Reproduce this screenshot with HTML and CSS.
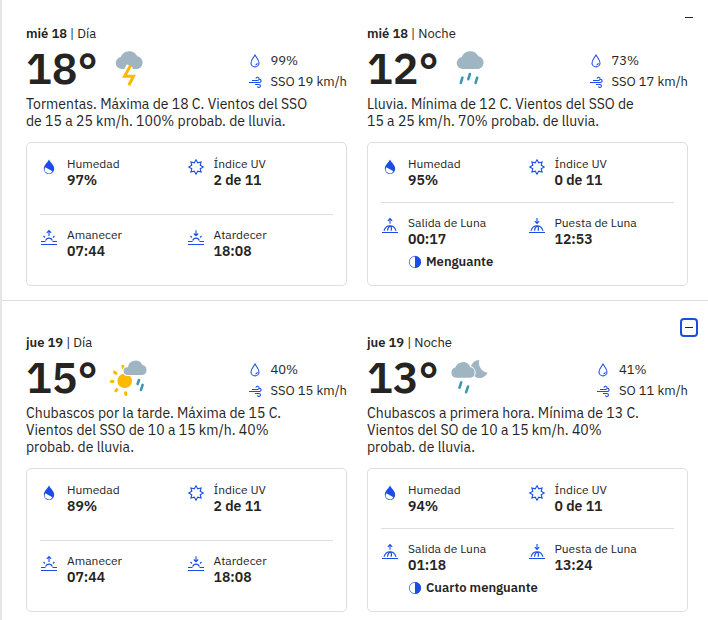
FILE: index.html
```html
<!DOCTYPE html>
<html lang="es">
<head>
<meta charset="utf-8">
<meta name="viewport" content="width=device-width, initial-scale=1">
<title>Pronóstico diario</title>
<link rel="stylesheet" href="styles.css">
</head>
<body>
<svg class="sprite" aria-hidden="true">
  <symbol id="storm" viewBox="0 0 40 40">
    <path class="cloud" d="M13 21a6 6 0 0 1-1.300-11.900A9 9 0 0 1 28.300 8.300 6.400 6.400 0 0 1 27 21z"/>
    <path class="halo" d="M21 18l-6 11h9.500l-4.500 9"/>
    <path class="bolt" d="M21.500 17.500L15.600 28.300H24.500L19.800 37.300"/>
  </symbol>
  <symbol id="rain" viewBox="0 0 40 40">
    <path class="cloud" d="M13 21a6 6 0 0 1-1.300-11.900A9 9 0 0 1 28.300 8.300 6.400 6.400 0 0 1 27 21z"/>
    <path class="drops" d="M12.400 29.700l-1.600 5.200M19.900 26l-1.600 5.200M27.200 29.700l-1.600 5.200"/>
  </symbol>
  <symbol id="sun-shower" viewBox="0 0 40 40">
    <circle class="sun" cx="15.700" cy="23.800" r="7.300"/>
    <path class="rays" d="M13.800 9.200l.4 1.600M5.500 15.200l1.500 1.100M2.300 24.600l1.700-.2M6.800 33.900l1.100-1.300M16.600 35.800l.2 1.600"/>
    <path class="cloud cloud-front" d="M18.500 18a4 4 0 0 1-1.200-7.800H19A7.500 7.500 0 0 1 33.300 8 5.100 5.100 0 0 1 33.500 18z"/>
    <path class="drops" d="M30 23l-1.400 4M33.600 27.900l-1.600 5"/>
  </symbol>
  <symbol id="moon-rain" viewBox="0 0 40 40">
    <path class="cloud" d="M29.300 3A10 10 0 0 0 37.700 15.700 9 9 0 1 1 29.300 3z"/>
    <path class="cloud cloud-front" d="M6.500 20.800a5.200 5.200 0 0 1-1.300-10.200A8 8 0 0 1 20.200 10.100 5.400 5.400 0 0 1 19.800 20.800z"/>
    <path class="drops" d="M11.200 25.400l-1.700 5.300M18 29.600l-1.900 5.600"/>
  </symbol>
  <symbol id="drop" viewBox="0 0 16 16">
    <path class="line" d="M8 2C6.500 4.600 4 6.900 4 9.900a4 4 0 0 0 8 0C12 6.900 9.500 4.600 8 2zM8.500 12c1.100-.2 1.700-.9 1.800-1.900"/>
  </symbol>
  <symbol id="wind" viewBox="0 0 16 16">
    <path class="line" d="M5 6.500h5.500a1.600 1.600 0 1 0-1.600-1.900M2 8.500h10.500a1.600 1.600 0 1 0-.6-3.100M8 10.500h4a1.500 1.500 0 1 1-1.500 1.900"/>
  </symbol>
  <symbol id="humidity" viewBox="0 0 18 18">
    <path class="fill" fill-rule="evenodd" d="M9 1.500C7.200 4.900 3.800 7.200 3.800 10.700a5.200 5.200 0 0 0 10.400 0C14.200 7.200 10.800 4.900 9 1.500zM5.300 9.200l7.100 4a3.900 3.900 0 0 1-7.100-4z"/>
  </symbol>
  <symbol id="uv" viewBox="0 0 18 18">
    <path class="line" d="M9 1.800l1.700 3 3.400-.9-.9 3.400 3 1.700-3 1.700.9 3.400-3.400-.9-1.700 3-1.700-3-3.400.9.9-3.400-3-1.700 3-1.700-.9-3.400 3.400.9z"/>
  </symbol>
  <symbol id="sunrise" viewBox="0 0 18 18">
    <path class="line" d="M1 12.500h4.500M12.500 12.500H17M1 15.500h16M5.700 11.700a3.400 3.400 0 0 1 6.600 0M9 7V2M6.800 3.800L9 1.600l2.200 2.200M5 8.500L3.500 7M13 8.500L14.500 7"/>
  </symbol>
  <symbol id="sunset" viewBox="0 0 18 18">
    <path class="line" d="M1 12.500h4.500M12.500 12.500H17M1 15.500h16M5.700 11.700a3.400 3.400 0 0 1 6.600 0M9 1.300v5.300M6.800 4.500L9 6.700l2.200-2.200M5 8.500L3.500 7M13 8.500L14.500 7"/>
  </symbol>
  <symbol id="moonrise" viewBox="0 0 18 18">
    <path class="line" d="M1 15.500h16M3 13.800C4 10.500 6.200 8.700 9 8.700s5 1.800 6 5.100M9.500 8.800C7.500 9.800 6.700 11.500 6.500 13.800M9.500 8.800c1.200 1.200 1.300 2.900.5 5M9 6.800V1.600M6.800 3.800L9 1.600l2.200 2.200"/>
  </symbol>
  <symbol id="moonset" viewBox="0 0 18 18">
    <path class="line" d="M1 15.500h16M3 13.800C4 10.500 6.200 8.700 9 8.700s5 1.800 6 5.100M9.500 8.800C7.500 9.800 6.700 11.500 6.500 13.800M9.500 8.800c1.200 1.200 1.300 2.900.5 5M9 1v5.300M6.800 4.200L9 6.400l2.200-2.200"/>
  </symbol>
  <symbol id="waning" viewBox="0 0 14 14">
    <circle class="ring" cx="7" cy="7" r="5.700"/>
    <path class="fill" d="M7 1a6 6 0 0 1 0 12z"/>
  </symbol>
</svg>

<main class="forecast">
  <section class="day">
    <button class="toggle" type="button" aria-label="Contraer mié 18"></button>
    <article class="part">
      <h2 class="title"><strong>mié 18</strong> | Día</h2>
      <div class="summary">
        <span class="temp">18°</span>
        <svg class="weather"><use href="#storm"/></svg>
        <ul class="stats">
          <li><svg><use href="#drop"/></svg>99%</li>
          <li><svg><use href="#wind"/></svg>SSO 19 km/h</li>
        </ul>
      </div>
      <p class="text">Tormentas. Máxima de 18 C. Vientos del SSO de 15 a 25 km/h. 100% probab. de lluvia.</p>
      <div class="card">
        <div class="pair">
          <div class="item"><svg><use href="#humidity"/></svg><dl><dt>Humedad</dt><dd>97%</dd></dl></div>
          <div class="item"><svg><use href="#uv"/></svg><dl><dt>Índice UV</dt><dd>2 de 11</dd></dl></div>
        </div>
        <div class="pair">
          <div class="item"><svg><use href="#sunrise"/></svg><dl><dt>Amanecer</dt><dd>07:44</dd></dl></div>
          <div class="item"><svg><use href="#sunset"/></svg><dl><dt>Atardecer</dt><dd>18:08</dd></dl></div>
        </div>
      </div>
    </article>
    <article class="part">
      <h2 class="title"><strong>mié 18</strong> | Noche</h2>
      <div class="summary">
        <span class="temp">12°</span>
        <svg class="weather"><use href="#rain"/></svg>
        <ul class="stats">
          <li><svg><use href="#drop"/></svg>73%</li>
          <li><svg><use href="#wind"/></svg>SSO 17 km/h</li>
        </ul>
      </div>
      <p class="text">Lluvia. Mínima de 12 C. Vientos del SSO de 15 a 25 km/h. 70% probab. de lluvia.</p>
      <div class="card card-night">
        <div class="pair">
          <div class="item"><svg><use href="#humidity"/></svg><dl><dt>Humedad</dt><dd>95%</dd></dl></div>
          <div class="item"><svg><use href="#uv"/></svg><dl><dt>Índice UV</dt><dd>0 de 11</dd></dl></div>
        </div>
        <div class="pair">
          <div class="item"><svg><use href="#moonrise"/></svg><dl><dt>Salida de Luna</dt><dd>00:17</dd><dd class="phase"><svg><use href="#waning"/></svg>Menguante</dd></dl></div>
          <div class="item"><svg><use href="#moonset"/></svg><dl><dt>Puesta de Luna</dt><dd>12:53</dd></dl></div>
        </div>
      </div>
    </article>
  </section>

  <section class="day">
    <button class="toggle toggle-focus" type="button" aria-label="Contraer jue 19"></button>
    <article class="part">
      <h2 class="title"><strong>jue 19</strong> | Día</h2>
      <div class="summary">
        <span class="temp">15°</span>
        <svg class="weather"><use href="#sun-shower"/></svg>
        <ul class="stats">
          <li><svg><use href="#drop"/></svg>40%</li>
          <li><svg><use href="#wind"/></svg>SSO 15 km/h</li>
        </ul>
      </div>
      <p class="text">Chubascos por la tarde. Máxima de 15 C. Vientos del SSO de 10 a 15 km/h. 40% probab. de lluvia.</p>
      <div class="card">
        <div class="pair">
          <div class="item"><svg><use href="#humidity"/></svg><dl><dt>Humedad</dt><dd>89%</dd></dl></div>
          <div class="item"><svg><use href="#uv"/></svg><dl><dt>Índice UV</dt><dd>2 de 11</dd></dl></div>
        </div>
        <div class="pair">
          <div class="item"><svg><use href="#sunrise"/></svg><dl><dt>Amanecer</dt><dd>07:44</dd></dl></div>
          <div class="item"><svg><use href="#sunset"/></svg><dl><dt>Atardecer</dt><dd>18:08</dd></dl></div>
        </div>
      </div>
    </article>
    <article class="part">
      <h2 class="title"><strong>jue 19</strong> | Noche</h2>
      <div class="summary">
        <span class="temp">13°</span>
        <svg class="weather"><use href="#moon-rain"/></svg>
        <ul class="stats">
          <li><svg><use href="#drop"/></svg>41%</li>
          <li><svg><use href="#wind"/></svg>SO 11 km/h</li>
        </ul>
      </div>
      <p class="text">Chubascos a primera hora. Mínima de 13 C. Vientos del SO de 10 a 15 km/h. 40% probab. de lluvia.</p>
      <div class="card card-night">
        <div class="pair">
          <div class="item"><svg><use href="#humidity"/></svg><dl><dt>Humedad</dt><dd>94%</dd></dl></div>
          <div class="item"><svg><use href="#uv"/></svg><dl><dt>Índice UV</dt><dd>0 de 11</dd></dl></div>
        </div>
        <div class="pair">
          <div class="item"><svg><use href="#moonrise"/></svg><dl><dt>Salida de Luna</dt><dd>01:18</dd><dd class="phase"><svg><use href="#waning"/></svg>Cuarto menguante</dd></dl></div>
          <div class="item"><svg><use href="#moonset"/></svg><dl><dt>Puesta de Luna</dt><dd>13:24</dd></dl></div>
        </div>
      </div>
    </article>
  </section>
</main>
</body>
</html>
```
FILE: styles.css
```css
* { box-sizing: border-box; }

body {
  margin: 0;
  background: #fff;
  color: #252422;
  font-family: "IBM Plex Sans", "Noto Sans", sans-serif;
  font-size: 12px;
}

h2, p, ul, dl, dd { margin: 0; padding: 0; }
svg { display: block; flex: none; }
.sprite { position: absolute; width: 0; height: 0; }

.forecast { border-left: 2px solid #e6e6e6; }

.day {
  position: relative;
  display: grid;
  grid-template-columns: 1fr 1fr;
  gap: 20px;
  padding: 32px 20px 14px 24px;
  border-bottom: 1px solid #dedede;
}
.day:first-child { padding-top: 24px; }
.day:last-child { border-bottom: 0; padding-bottom: 8px; }

.toggle {
  position: absolute;
  top: 17px;
  right: 10px;
  display: grid;
  place-items: center;
  width: 18px;
  height: 19px;
  padding: 0;
  border: 2px solid transparent;
  border-radius: 4px;
  background: none;
}
.day:first-child .toggle { top: 8px; }
.toggle::before { content: ""; width: 8px; height: 1px; background: #252422; }
.toggle-focus { border-color: #1b4de4; }

.title { font-size: 13px; line-height: 20px; font-weight: 400; }
.title strong { font-weight: 600; }

.summary { display: flex; align-items: center; gap: 11px; height: 52px; padding-bottom: 4px; }
.temp { min-width: 71px; font-size: 43px; line-height: 48px; font-weight: 600; }
.weather { width: 40px; height: 40px; }

.stats { margin-left: auto; padding-top: 6px; list-style: none; font-size: 13px; line-height: 21px; }
.stats li { display: flex; align-items: center; gap: 8px; }
.stats svg { width: 16px; height: 16px; }

.text { max-width: 284px; font-size: 14px; line-height: 17px; }

.card {
  display: grid;
  grid-template-rows: 72px 1fr;
  min-height: 144px;
  margin-top: 12px;
  padding: 0 13px;
  border: 1px solid #dedede;
  border-radius: 5px;
}
.card-night { grid-template-rows: auto 1fr; }

.pair { display: grid; grid-template-columns: repeat(2, minmax(0, 1fr)); padding: 12px 0; }
.pair:first-child { padding: 13px 0 14px; border-bottom: 1px solid #dedede; }

.item { display: flex; gap: 9px; }
.item > svg { width: 18px; height: 18px; margin-top: 2px; }
.item dt { line-height: 16px; }
.item dd { font-size: 14px; line-height: 16px; font-weight: 600; white-space: nowrap; }
.item .phase { display: flex; align-items: center; gap: 4px; margin-top: 7px; font-size: 13px; }
.phase svg { width: 14px; height: 14px; }

.cloud { fill: #a0b5c2; }
.cloud-front { stroke: #fff; stroke-width: 2; paint-order: stroke; }
.sun { fill: #ffb900; }
.halo, .bolt, .rays, .drops, .line, .ring { fill: none; }
.halo { stroke: #fff; stroke-width: 7; }
.bolt { stroke: #ffb900; stroke-width: 3; }
.rays { stroke: #ffb900; stroke-width: 3; stroke-linecap: round; }
.drops { stroke: #3d97b3; stroke-width: 2.6; stroke-linecap: round; }
.line { stroke: #1b4de4; stroke-width: 1.1; }
.ring { stroke: #1b4de4; stroke-width: 0.7; }
.fill { fill: #1b4de4; }
```
